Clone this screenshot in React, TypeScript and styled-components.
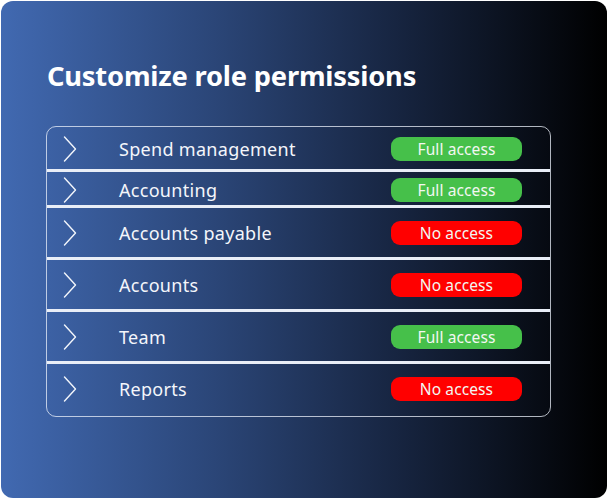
import React from "react";
import styled, { createGlobalStyle } from "styled-components";

const Global = createGlobalStyle`
  html, body { margin: 0; padding: 0; background: #ffffff; }
  body { font-family: "Noto Sans", "Open Sans", sans-serif; }
`;

const Card = styled.div`
  box-sizing: border-box;
  margin: 1px 0 0 1px;
  width: 606px;
  height: 497px;
  border-radius: 12px;
  background: linear-gradient(90deg, #4169b1 0%, #2b4678 35%, #172541 65%, #000000 100%);
  padding: 56px 56px 0 45px;
  display: flex;
  flex-direction: column;
`;

const Title = styled.h1`
  margin: 0 0 0 1px;
  color: #ffffff;
  font-family: "Noto Sans", sans-serif;
  font-weight: 700;
  font-size: 27.3px;
  line-height: 38px;
  letter-spacing: -0.2px;
`;

const Table = styled.div`
  margin-top: 31px;
  border: 1px solid rgba(235, 240, 250, 0.75);
  border-radius: 10px;
  display: flex;
  flex-direction: column;
  overflow: hidden;
`;

const Row = styled.div<{ $h: number; $first?: boolean; $pt?: number; $pb?: number }>`
  box-sizing: border-box;
  height: ${(p) => p.$h}px;
  display: grid;
  grid-template-columns: 56px 272px 131px;
  align-items: center;
  padding-left: 16px;
  padding-top: ${(p) => p.$pt ?? 0}px;
  padding-bottom: ${(p) => p.$pb ?? 0}px;
  border-top: ${(p) => (p.$first ? "none" : "3px solid #e9eef7")};
`;

const Chevron = styled.svg`
  width: 14px;
  height: 26px;
  display: block;
`;

const Label = styled.span`
  color: #f4f6fb;
  font-size: 18px;
  letter-spacing: 0.3px;
`;

const Badge = styled.span<{ $full: boolean }>`
  height: 24px;
  border-radius: 9px;
  background: ${(p) => (p.$full ? "#46c04a" : "#ff0000")};
  color: #f3f7f2;
  font-size: 15.5px;
  letter-spacing: 0.1px;
  display: flex;
  align-items: center;
  justify-content: center;
`;

const rows = [
  { label: "Spend management", full: true, h: 42, pt: 2, pb: 0 },
  { label: "Accounting", full: true, h: 36, pt: 3, pb: 0 },
  { label: "Accounts payable", full: false, h: 52, pt: 0, pb: 0 },
  { label: "Accounts", full: false, h: 52, pt: 0, pb: 0 },
  { label: "Team", full: true, h: 52, pt: 0, pb: 0 },
  { label: "Reports", full: false, h: 55, pt: 0, pb: 2 },
];

export default function App() {
  return (
    <>
      <Global />
      <Card>
        <Title>Customize role permissions</Title>
        <Table>
          {rows.map((r, i) => (
            <Row key={r.label} $h={r.h} $first={i === 0} $pt={r.pt} $pb={r.pb}>
              <Chevron viewBox="0 0 14 26">
                <polyline
                  points="1.5,1 12.5,13 1.5,25"
                  fill="none"
                  stroke="#f2f5fb"
                  strokeWidth="1.4"
                  strokeLinecap="round"
                  strokeLinejoin="round"
                />
              </Chevron>
              <Label>{r.label}</Label>
              <Badge $full={r.full}>{r.full ? "Full access" : "No access"}</Badge>
            </Row>
          ))}
        </Table>
      </Card>
    </>
  );
}
